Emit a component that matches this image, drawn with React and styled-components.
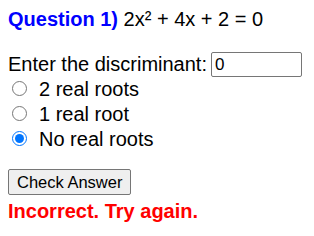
import React from "react";
import styled, { createGlobalStyle } from "styled-components";

const GlobalStyle = createGlobalStyle`
  body {
    margin: 8px;
    font-family: "Liberation Sans", Arial, sans-serif;
    font-size: 20px;
    line-height: 23px;
    color: #000;
    background: #fff;
  }
`;

const Title = styled.div`
  margin: 0 0 21px;
`;

const QuestionLabel = styled.span`
  color: #0000ff;
  font-weight: bold;
`;

const InputRow = styled.div`
  display: flex;
  align-items: center;
  gap: 4px;
`;

const NumberInput = styled.input`
  box-sizing: border-box;
  width: 91px;
  height: 25px;
  padding: 1px 3px;
  font-family: "Liberation Sans", Arial, sans-serif;
  font-size: 17px;
  border: 1px solid #767676;
  border-radius: 2px;
`;

const Options = styled.div`
  display: flex;
  flex-direction: column;
`;

const Option = styled.label`
  display: flex;
  align-items: center;
  height: 25px;
`;

const Radio = styled.input`
  width: 15px;
  height: 15px;
  margin: 0 12px 2px 4px;
  accent-color: #0075ff;
`;

const CheckButton = styled.button`
  display: block;
  box-sizing: border-box;
  margin-top: 17px;
  padding: 0 8px;
  height: 26px;
  font-family: "Liberation Sans", Arial, sans-serif;
  font-size: 16.5px;
  color: #000;
  background: #efefef;
  border: 1px solid #767676;
  border-radius: 2px;
`;

const Feedback = styled.div`
  margin-top: 5px;
  color: #ff0000;
  font-weight: bold;
`;

const options = ["2 real roots", "1 real root", "No real roots"];

export default function App() {
  return (
    <>
      <GlobalStyle />
      <Title>
        <QuestionLabel>Question 1)</QuestionLabel> 2x² + 4x + 2 = 0
      </Title>
      <InputRow>
        Enter the discriminant:
        <NumberInput type="text" defaultValue="0" />
      </InputRow>
      <Options>
        {options.map((o, i) => (
          <Option key={o}>
            <Radio type="radio" name="roots" defaultChecked={i === 2} />
            {o}
          </Option>
        ))}
      </Options>
      <CheckButton>Check Answer</CheckButton>
      <Feedback>Incorrect. Try again.</Feedback>
    </>
  );
}
